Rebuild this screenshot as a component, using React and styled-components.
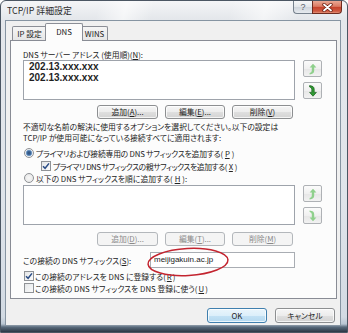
import React from 'react';
import styled, { createGlobalStyle, css } from 'styled-components';

const Global = createGlobalStyle`
  html, body { margin: 0; padding: 0; background: #fff; }
  * { box-sizing: border-box; }
  u { text-decoration: underline; text-underline-offset: 1px; }
`;

const JP = `"Noto Sans CJK JP", "Noto Sans", sans-serif`;
const FS = '7.8px';

const Window = styled.div`
  position: relative;
  width: 348px;
  height: 333px;
  border: 1px solid #4b5663;
  border-radius: 6px 6px 0 0;
  overflow: hidden;
  display: flex;
  flex-direction: column;
  font-family: ${JP};
  font-feature-settings: "palt";
  color: #222;
  background: linear-gradient(180deg, #f4f5f7 0px, #e4e7eb 18px, #dfe4ea 200px,
    #d2dae3 316px, #b9c6d3 323px, #5a6b7d 326px, #2b3744 331px);
`;

const TitleBar = styled.div`
  height: 19px;
  display: flex;
  align-items: flex-start;
  padding-left: 6px;
  background: linear-gradient(103deg, rgba(255,255,255,0) 28%, rgba(255,255,255,.6) 36%,
    rgba(255,255,255,0) 44%, rgba(255,255,255,0) 66%, rgba(255,255,255,.55) 76%,
    rgba(255,255,255,0) 86%);
`;

const Title = styled.div`
  flex: 1;
  font-size: 8.9px;
  line-height: 20px;
  color: #2c2c2c;
  white-space: nowrap;
`;

const CaptionButtons = styled.div`
  display: flex;
  margin-right: 5px;
`;

const HelpButton = styled.div`
  width: 19px;
  height: 13px;
  border: 1px solid #76818d;
  border-top: none;
  border-right: none;
  border-radius: 0 0 0 4px;
  background: linear-gradient(#f6f7f8, #e2e6ea 50%, #cfd5dc 51%, #e6eaef);
  font-family: "Liberation Sans", sans-serif;
  font-size: 9px;
  line-height: 12px;
  text-align: center;
  color: #58616b;
`;

const CloseButton = styled.div`
  width: 30px;
  height: 13px;
  border: 1px solid #6e2b1f;
  border-top: none;
  border-radius: 0 0 4px 0;
  background: linear-gradient(#eaa894, #db7a63 45%, #c6432c 52%, #cf5940 85%, #e39279);
  display: flex;
  align-items: center;
  justify-content: center;
`;

const Client = styled.div`
  flex: 1;
  margin: 0 6px 6px 4px;
  border: 1px solid #8694a2;
  background: #f0f0f0;
  padding: 2px 3px 0 4px;
  display: flex;
  flex-direction: column;
`;

const TabStrip = styled.div`
  height: 17px;
  display: flex;
  align-items: flex-end;
  padding-left: 2px;
`;

const Tab = styled.div`
  width: ${p => p.$w}px;
  height: 14px;
  border: 1px solid #8b8e96;
  border-bottom: none;
  border-radius: 2px 2px 0 0;
  background: linear-gradient(#f5f5f5, #e6e6e6);
  font-size: ${FS};
  line-height: 13px;
  text-align: center;
  white-space: nowrap;
  ${p => p.$active && css`
    position: relative;
    z-index: 1;
    width: ${p.$w + 4}px;
    height: 18px;
    margin: 0 -2px -1px;
    background: #fcfcfc;
    line-height: 15px;
  `}
`;

const Panel = styled.div`
  height: 259px;
  border: 1px solid #898c95;
  background: #fcfcfc;
  padding: 8px 0 0 12px;
  display: flex;
  flex-direction: column;
`;

const Label = styled.div`
  font-size: ${FS};
  line-height: 11px;
  white-space: nowrap;
  color: #222;
`;

const Paragraph = styled(Label)`
  margin-top: 2px;
`;

const ListRow = styled.div`
  display: flex;
  gap: 8px;
  margin-top: ${p => p.$mt || 0}px;
`;

const ListBox = styled.div`
  width: 272px;
  height: 40px;
  border: 1px solid #9ea3ab;
  background: #fff;
  padding-left: 5px;
`;

const ListItem = styled.div`
  font-family: "Liberation Sans", Arial, sans-serif;
  font-weight: bold;
  font-size: 10px;
  line-height: 11px;
  color: #1f1f1f;
`;

const ArrowColumn = styled.div`
  display: flex;
  flex-direction: column;
  gap: 5px;
`;

const ArrowButton = styled.div`
  width: 19px;
  height: 17px;
  border: 1px solid #aeb1b5;
  border-radius: 2px;
  background: linear-gradient(#fbfbfb, #f0f0f0 50%, #e6e6e6 51%, #f2f2f2);
  display: flex;
  align-items: center;
  justify-content: center;
`;

const ButtonRow = styled.div`
  width: 272px;
  display: flex;
  justify-content: flex-end;
  gap: 7px;
  padding-right: 2px;
  margin-top: ${p => p.$mt}px;
`;

const PushButton = styled.div`
  width: ${p => p.$w || 61}px;
  height: ${p => p.$h || 14}px;
  border: 1px solid ${p => (p.$disabled ? '#b3b7bb' : p.$default ? '#3f7fae' : '#8d8f91')};
  border-radius: 3px;
  font-size: ${FS};
  line-height: ${p => (p.$h || 14) - 2}px;
  text-align: center;
  white-space: nowrap;
  color: ${p => (p.$disabled ? '#8a8a8a' : '#222')};
  background: ${p => p.$disabled
    ? '#f4f4f4'
    : p.$default
      ? 'linear-gradient(#eaf5fc, #dcefFA 50%, #c4e2f5 51%, #b3d8ef)'
      : 'linear-gradient(#f6f6f6, #ececec 50%, #dfdfdf 51%, #d3d3d3)'};
  box-shadow: inset 0 0 0 1px ${p => (p.$disabled ? 'transparent' : 'rgba(255,255,255,.75)')};
`;

const OptionRow = styled.div`
  display: flex;
  align-items: center;
  gap: ${p => p.$gap ?? 2}px;
  height: 12px;
  margin-top: ${p => p.$mt || 0}px;
  padding-left: ${p => p.$indent || 1}px;
  font-size: ${FS};
  letter-spacing: ${p => p.$ls || 0}px;
  white-space: nowrap;
`;

const Radio = styled.span`
  width: 10px;
  height: 10px;
  flex: none;
  border-radius: 50%;
  border: 1px solid #8f9296;
  background: ${p => p.$checked
    ? 'radial-gradient(circle, #2d4d78 0, #3e6a9e 2px, #8fb2d6 3px, #f4f4f4 3.6px, #e3e3e3 5px)'
    : 'radial-gradient(circle, #f7f7f7 0, #e6e6e6 5px)'};
`;

const CheckBox = styled.span`
  width: 10px;
  height: 10px;
  flex: none;
  border: 1px solid #8f9296;
  background: linear-gradient(135deg, #e4e6e8, #fbfbfb);
  display: flex;
  align-items: center;
  justify-content: center;
`;

const SuffixRow = styled.div`
  width: 272px;
  display: flex;
  align-items: center;
  justify-content: space-between;
  margin-top: 6px;
`;

const SuffixField = styled.div`
  position: relative;
  width: 145px;
  height: 16px;
  border: 1px solid #a9adb3;
  background: #fff;
  padding-left: 3px;
  font-family: "Liberation Sans", Arial, sans-serif;
  font-size: 8px;
  line-height: 14px;
  color: #222;
`;

const Annotation = styled.svg`
  position: absolute;
  left: -4px;
  top: -6px;
  overflow: visible;
`;

const DialogButtons = styled.div`
  display: flex;
  justify-content: flex-end;
  gap: 8px;
  margin-top: 9px;
  padding-right: 2px;
`;

const Check = ({ checked }) => (
  <CheckBox>
    {checked && (
      <svg width="8" height="8" viewBox="0 0 8 8">
        <path d="M1 4.2 L3.1 6.3 L7 1.4" fill="none" stroke="#2b4d86" strokeWidth="1.5" />
      </svg>
    )}
  </CheckBox>
);

const Arrow = ({ dir, on }) => (
  <svg width="9" height="12" viewBox="0 0 9 12">
    <path
      d={dir === 'up'
        ? 'M5 0.8 L1.6 4.6 H3.8 V7.8 Q3.8 9.6 1.6 10 V11.4 Q6.2 11 6.2 7.8 V4.6 H8.4 Z'
        : 'M5 11.2 L1.6 7.4 H3.8 V4.2 Q3.8 2.4 1.6 2 V0.6 Q6.2 1 6.2 4.2 V7.4 H8.4 Z'}
      fill={on ? '#2f9a33' : '#8fd08c'}
      stroke={on ? '#17601a' : 'none'}
      strokeWidth="0.7"
    />
  </svg>
);

export default function App() {
  return (
    <>
      <Global />
      <Window>
        <TitleBar>
          <Title>TCP/IP 詳細設定</Title>
          <CaptionButtons>
            <HelpButton>?</HelpButton>
            <CloseButton>
              <svg width="11" height="9" viewBox="0 0 11 9">
                <path d="M2 1.5 L9 7.5 M9 1.5 L2 7.5" stroke="#6a2012" strokeWidth="3.4" strokeLinecap="round" />
                <path d="M2 1.5 L9 7.5 M9 1.5 L2 7.5" stroke="#fff" strokeWidth="1.8" strokeLinecap="round" />
              </svg>
            </CloseButton>
          </CaptionButtons>
        </TitleBar>
        <Client>
          <TabStrip>
            <Tab $w={35}>IP 設定</Tab>
            <Tab $w={34} $active>DNS</Tab>
            <Tab $w={27}>WINS</Tab>
          </TabStrip>
          <Panel>
            <Label>DNS サーバー アドレス (使用順)(<u>N</u>):</Label>
            <ListRow>
              <ListBox>
                <ListItem>202.13.xxx.xxx</ListItem>
                <ListItem>202.13.xxx.xxx</ListItem>
              </ListBox>
              <ArrowColumn>
                <ArrowButton><Arrow dir="up" /></ArrowButton>
                <ArrowButton><Arrow dir="down" on /></ArrowButton>
              </ArrowColumn>
            </ListRow>
            <ButtonRow $mt={5}>
              <PushButton>追加(<u>A</u>)...</PushButton>
              <PushButton $w={60}>編集(<u>E</u>)...</PushButton>
              <PushButton>削除(<u>V</u>)</PushButton>
            </ButtonRow>
            <Paragraph>
              不適切な名前の解決に使用するオプションを選択してください。以下の設定は
              <br />
              TCP/IP が使用可能になっている接続すべてに適用されます:
            </Paragraph>
            <OptionRow $mt={4} $ls={-0.2}>
              <Radio $checked />
              プライマリおよび接続専用の DNS サフィックスを追加する(<u>P</u>)
            </OptionRow>
            <OptionRow $mt={1} $indent={18} $ls={-0.45}>
              <Check checked />
              プライマリ DNS サフィックスの親サフィックスを追加する(<u>X</u>)
            </OptionRow>
            <OptionRow>
              <Radio />
              以下の DNS サフィックスを順に追加する(<u>H</u>):
            </OptionRow>
            <ListRow $mt={1}>
              <ListBox />
              <ArrowColumn>
                <ArrowButton><Arrow dir="up" /></ArrowButton>
                <ArrowButton><Arrow dir="down" /></ArrowButton>
              </ArrowColumn>
            </ListRow>
            <ButtonRow $mt={7}>
              <PushButton $disabled>追加(<u>D</u>)...</PushButton>
              <PushButton $disabled $w={60}>編集(<u>T</u>)...</PushButton>
              <PushButton $disabled>削除(<u>M</u>)</PushButton>
            </ButtonRow>
            <SuffixRow>
              <Label>この接続の DNS サフィックス(<u>S</u>):</Label>
              <SuffixField>
                meijigakuin.ac.jp
                <Annotation width="84" height="30" viewBox="0 0 84 30">
                  <ellipse cx="41" cy="15" rx="40" ry="13.5" fill="none" stroke="#c3242f"
                    strokeWidth="1.5" transform="rotate(-3 41 15)" />
                </Annotation>
              </SuffixField>
            </SuffixRow>
            <OptionRow $mt={2} $gap={1}>
              <Check checked />
              この接続のアドレスを DNS に登録する(<u>R</u>)
            </OptionRow>
            <OptionRow $gap={1}>
              <Check />
              この接続の DNS サフィックスを DNS 登録に使う(<u>U</u>)
            </OptionRow>
          </Panel>
          <DialogButtons>
            <PushButton $default $w={60} $h={15}>OK</PushButton>
            <PushButton $w={60} $h={15}>キャンセル</PushButton>
          </DialogButtons>
        </Client>
      </Window>
    </>
  );
}
